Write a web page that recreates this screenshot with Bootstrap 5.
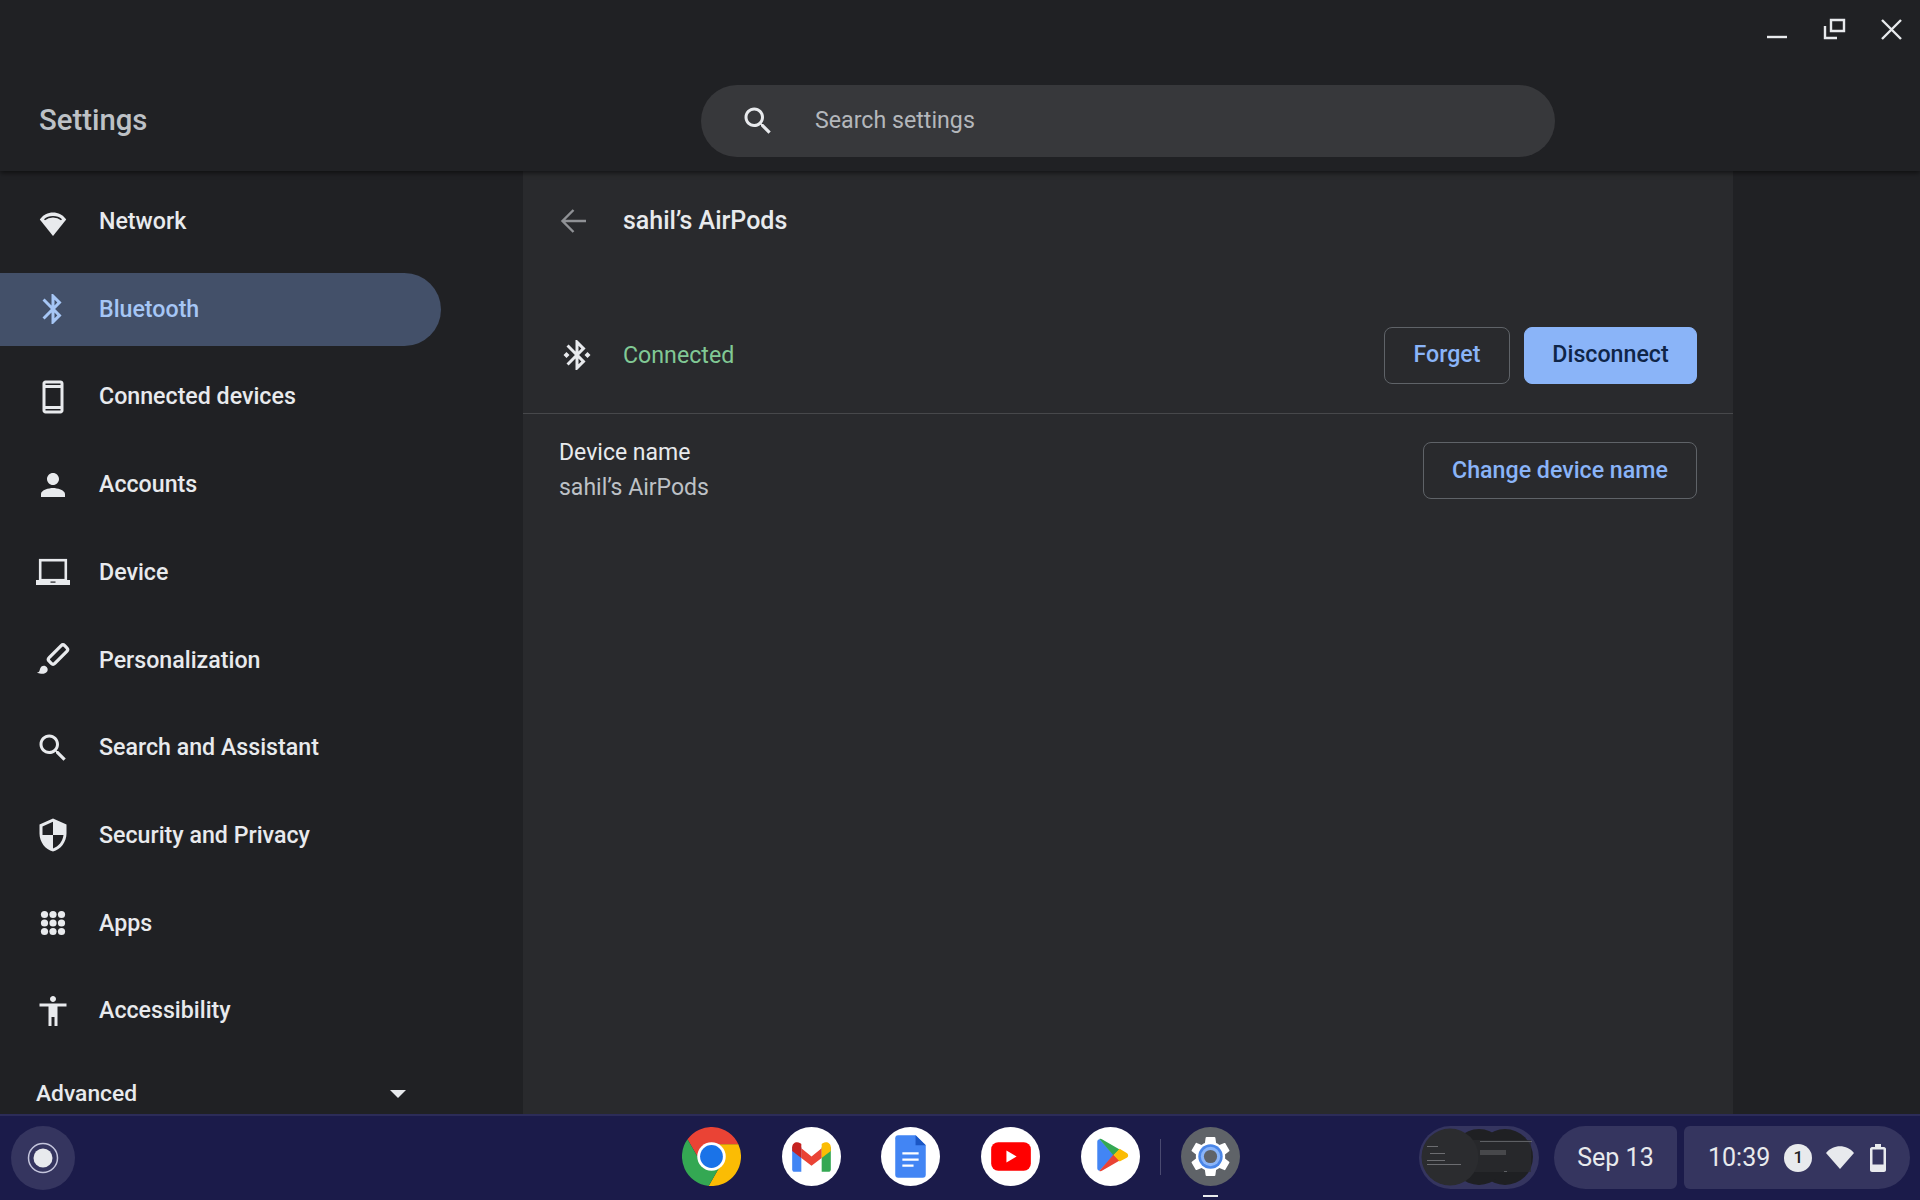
<!DOCTYPE html>
<html lang="en">
<head>
    <meta charset="UTF-8">
    <meta name="viewport" content="width=device-width, initial-scale=1.0">
    <title>Settings</title>
    <link href="https://cdn.jsdelivr.net/npm/bootstrap@5.3.3/dist/css/bootstrap.min.css" rel="stylesheet">
    <style>
        body{
            margin: 0;
            height: 1200px;
            overflow: hidden;
            background: #202124;
            font-family: Roboto, "Liberation Sans", sans-serif;
            color: #e8eaed;
        }
        .app-top{height: 171px; background: #202124; box-shadow: 0 2px 5px rgba(0,0,0,.55); z-index: 2;}
        .app-title{width: 701px; padding: 0 0 0 39px; font-size: 29.3px; font-weight: 500; color: #bdc1c6; margin-top: 102px; line-height: 36px;}
        .search-box{width: 854px; height: 72px; margin-top: 85px; border-radius: 36px; background: #37383b; padding-left: 39px;}
        .search-box span{margin-left: 39px; font-size: 23.2px; color: #b4b7bb; padding-bottom: 1px;}
        .win-btns{flex: 1; padding: 16px 16px 0 0; gap: 31px;}
        .app-body{height: 943px; overflow: hidden;}
        .side-nav{width: 523px; flex: none; padding-top: 14.5px; gap: 14.7px;}
        .side-item{width: 441px; height: 73px; padding: 0 0 1px 35px; gap: 28px; border-radius: 0 37px 37px 0; color: #e8eaed; font-size: 23.2px; font-weight: 500;}
        .side-item:hover{color: #e8eaed;}
        .side-item.on{background: #435069; color: #a6c6f5;}
        .side-item.on:hover{color: #a6c6f5;}
        .adv-row{width: 406px; padding-left: 36px; height: 28px; margin-top: 32px; font-size: 22.8px; font-weight: 500; line-height: 28px;}
        .adv-caret{width: 0; height: 0; border: 8px solid transparent; border-top: 8px solid #e8eaed; border-bottom: 0;}
        .panel{width: 1210px; flex: none; background: #292a2d;}
        .panel-head{height: 99px; padding-left: 33px;}
        .panel-head h1{margin: 0 0 0 31px; font-size: 25px; font-weight: 500; color: #e8eaed; line-height: 30px;}
        .conn-row{height: 144px; padding: 27px 36px 0 36px; border-bottom: 1px solid #47484b;}
        .conn-text{margin-left: 28px; color: #81c995; font-size: 23.2px;}
        .dev-row{padding: 21px 36px 0 36px;}
        .dev-name{font-size: 23px; line-height: 35px; color: #e8eaed;}
        .dev-name div + div{color: #bdc1c6;}
        .btn-cros{height: 57px; font-family: Roboto, sans-serif; font-size: 23.2px; font-weight: 500; border-radius: 8px; border: 1px solid #5f6368; color: #8ab4f8; background: transparent; padding: 0; line-height: 1;}
        .btn-cros:hover{color: #8ab4f8; border-color: #5f6368;}
        .btn-cros.fill{background: #8ab4f8; border-color: #8ab4f8; color: #0f2548; width: 173px; margin-left: 14px;}
        .btn-cros.fill:hover{background: #8ab4f8; color: #0f2548;}
        .btn-rename{width: 274px; margin-top: 7px;}
        .shelf{height: 86px; background: #1b1b4a; border-top: 2px solid #2c2c58; position: relative; z-index: 3;}
        .launcher-btn{position: absolute; left: 11px; top: 10px;}
        .dock{position: absolute; left: 682px; top: 11px; gap: 40.66px;}
        .dock-sep{width: 1px; height: 36px; background: #4a4a70; margin: 0 -20.5px; align-self: center;}
        .dock-mark{position: absolute; left: 521px; top: 68px; width: 15px; height: 2px; background: #e8eaed;}
        .tray{position: absolute; right: 10px; top: 10px; gap: 7px;}
        .tray-pill{height: 63px; background: #35355f; color: #e8eaed; font-size: 25px;}
        .date-pill{width: 123px; border-radius: 32px 6px 6px 32px; margin-left: 8px;}
        .clock-pill{width: 226px; border-radius: 6px 32px 32px 6px; padding-left: 24px;}
        .note-dot{width: 28px; height: 28px; border-radius: 50%; background: #e8eaed; color: #202124; font-size: 17px; font-weight: 500; margin-left: 14px; margin-right: 14px;}
    </style>
</head>
<body>
    <!-- title bar -->
    <header class="app-top d-flex position-relative">
        <div class="app-title">Settings</div>
        <div class="search-box d-flex align-items-center">
            <svg width="36" height="36" viewBox="0 0 24 24" fill="#e8eaed"><path d="M15.5 14h-.79l-.28-.27C15.41 12.59 16 11.11 16 9.5 16 5.91 13.09 3 9.5 3S3 5.91 3 9.5 5.91 16 9.5 16c1.61 0 3.09-.59 4.23-1.57l.27.28v.79l5 4.99L20.49 19l-4.99-5zm-6 0C7.01 14 5 11.99 5 9.5S7.01 5 9.5 5 14 7.01 14 9.5 11.99 14 9.5 14z"/></svg>
            <span>Search settings</span>
        </div>
        <div class="win-btns d-flex justify-content-end align-items-start">
            <svg width="26" height="26" viewBox="0 0 26 26" fill="none" stroke="#e8eaed" stroke-width="2.4"><path d="M3 21h20"/></svg>
            <svg width="26" height="26" viewBox="0 0 26 26" fill="none" stroke="#e8eaed" stroke-width="2.4"><path d="M10 4h13v11H10z"/><path d="M4 10v12h12"/></svg>
            <svg width="26" height="26" viewBox="0 0 26 26" fill="none" stroke="#e8eaed" stroke-width="2.4"><path d="M4 4l19 19M23 4L4 23"/></svg>
        </div>
    </header>

    <div class="app-body d-flex">
        <!-- left menu -->
        <div class="d-flex flex-column">
            <nav class="nav flex-column flex-nowrap side-nav">
                <a class="nav-link side-item d-flex align-items-center" href="#">
                    <svg width="36" height="36" viewBox="0 0 36 36" fill="#e8eaed"><path d="M18 32L4.8 15.6C11 6 25 6 31.2 15.6z"/><path d="M9.5 15.8C14 11.8 22 11.8 26.5 15.8" fill="none" stroke="#202124" stroke-width="1.5"/></svg>
                    Network
                </a>
                <a class="nav-link side-item on d-flex align-items-center" href="#">
                    <svg width="36" height="36" viewBox="0 0 24 24" fill="#a6c6f5"><path d="M17.71 7.71L12 2h-1v7.59L6.41 5 5 6.41 10.59 12 5 17.59 6.41 19 11 14.41V22h1l5.71-5.71-4.3-4.29 4.3-4.29zM13 5.83l1.88 1.88L13 9.59V5.83zm1.88 10.46L13 18.17v-3.76l1.88 1.88z"/></svg>
                    Bluetooth
                </a>
                <a class="nav-link side-item d-flex align-items-center" href="#">
                    <svg width="36" height="36" viewBox="0 0 24 24" fill="#e8eaed"><path d="M17 1.01L7 1c-1.1 0-2 .9-2 2v18c0 1.1.9 2 2 2h10c1.1 0 2-.9 2-2V3c0-1.1-.9-1.99-2-1.99zM17 21H7v-1h10v1zm0-3H7V6h10v12zm0-14H7V3h10v1z"/></svg>
                    Connected devices
                </a>
                <a class="nav-link side-item d-flex align-items-center" href="#">
                    <svg width="36" height="36" viewBox="0 0 24 24" fill="#e8eaed"><path d="M12 12c2.21 0 4-1.79 4-4s-1.79-4-4-4-4 1.79-4 4 1.79 4 4 4zm0 2c-2.67 0-8 1.34-8 4v2h16v-2c0-2.66-5.33-4-8-4z"/></svg>
                    Accounts
                </a>
                <a class="nav-link side-item d-flex align-items-center" href="#">
                    <svg width="36" height="36" viewBox="0 0 36 36" fill="#e8eaed"><rect x="5.2" y="6.2" width="25.6" height="20" fill="none" stroke="#e8eaed" stroke-width="2.6"/><path d="M1 26h34v5H1z"/><rect x="15.5" y="27.5" width="5" height="1.2" fill="#202124"/></svg>
                    Device
                </a>
                <a class="nav-link side-item d-flex align-items-center" href="#">
                    <svg width="36" height="36" viewBox="0 0 36 36" fill="#e8eaed"><rect x="12" y="8.500" width="22" height="8" rx="2.500" transform="rotate(-45 23 12.500)" fill="none" stroke="#e8eaed" stroke-width="3.200"/><path d="M2 30.500c2 0 2.500-1 3-3.500.6-2.500 3-3.800 5.200-3 2.400.9 3.200 3.700 2 5.500-1.300 2-3.900 2.400-6.200 2.200-1.600-.1-3-.4-4-1.200z"/></svg>
                    Personalization
                </a>
                <a class="nav-link side-item d-flex align-items-center" href="#">
                    <svg width="36" height="36" viewBox="0 0 24 24" fill="#e8eaed"><path d="M15.5 14h-.79l-.28-.27C15.41 12.59 16 11.11 16 9.5 16 5.91 13.09 3 9.5 3S3 5.91 3 9.5 5.91 16 9.500 16c1.610 0 3.090-.59 4.230-1.570l.27.28v.79l5 4.990L20.490 19l-4.990-5zm-6 0C7.010 14 5 11.990 5 9.500S7.010 5 9.500 5 14 7.010 14 9.500 11.990 14 9.500 14z"/></svg>
                    Search and Assistant
                </a>
                <a class="nav-link side-item d-flex align-items-center" href="#">
                    <svg width="36" height="36" viewBox="0 0 24 24" fill="#e8eaed"><path d="M12 1L3 5v6c0 5.550 3.840 10.740 9 12 5.160-1.260 9-6.450 9-12V5l-9-4zm0 10.990h7c-.53 4.120-3.280 7.790-7 8.940V12H5V6.300l7-3.110v8.800z"/></svg>
                    Security and Privacy
                </a>
                <a class="nav-link side-item d-flex align-items-center" href="#">
                    <svg width="36" height="36" viewBox="0 0 36 36" fill="#e8eaed"><circle cx="9.500" cy="9.500" r="3.600"/><circle cx="18" cy="9.500" r="3.600"/><circle cx="26.500" cy="9.500" r="3.600"/><circle cx="9.500" cy="18" r="3.600"/><circle cx="18" cy="18" r="3.600"/><circle cx="26.500" cy="18" r="3.600"/><circle cx="9.500" cy="26.500" r="3.600"/><circle cx="18" cy="26.500" r="3.600"/><circle cx="26.500" cy="26.500" r="3.600"/></svg>
                    Apps
                </a>
                <a class="nav-link side-item d-flex align-items-center" href="#">
                    <svg width="36" height="36" viewBox="0 0 24 24" fill="#e8eaed"><path d="M12 2c1.100 0 2 .9 2 2s-.9 2-2 2-2-.9-2-2 .9-2 2-2zm9 7h-6v13h-2v-6h-2v6H9V9H3V7h18v2z"/></svg>
                    Accessibility
                </a>
            </nav>
            <div class="adv-row d-flex align-items-center justify-content-between">
                <span>Advanced</span>
                <span class="adv-caret"></span>
            </div>
        </div>

        <!-- device page -->
        <main class="panel">
            <div class="panel-head d-flex align-items-center">
                <svg width="36" height="36" viewBox="0 0 36 36" fill="none" stroke="#8f9195" stroke-width="2.400"><path d="M30 18H7M17.500 7L6.500 18l11 11"/></svg>
                <h1>sahil’s AirPods</h1>
            </div>
            <div class="conn-row d-flex align-items-center">
                <svg width="36" height="36" viewBox="0 0 24 24" fill="#e8eaed"><path d="M7 12l-2-2-2 2 2 2 2-2zm10.710-4.290L12 2h-1v7.590L6.410 5 5 6.410 10.590 12 5 17.590 6.410 19 11 14.410V22h1l5.710-5.710-4.300-4.290 4.300-4.290zM13 5.830l1.880 1.880L13 9.590V5.830zm1.880 10.460L13 18.170v-3.760l1.880 1.880zM19 10l-2 2 2 2 2-2-2-2z"/></svg>
                <span class="conn-text me-auto">Connected</span>
                <button class="btn btn-cros" style="width: 126px">Forget</button>
                <button class="btn btn-cros fill">Disconnect</button>
            </div>
            <div class="dev-row d-flex justify-content-between align-items-start">
                <div class="dev-name">
                    <div>Device name</div>
                    <div>sahil’s AirPods</div>
                </div>
                <button class="btn btn-cros btn-rename">Change device name</button>
            </div>
        </main>
    </div>

    <!-- shelf -->
    <footer class="shelf">
        <div class="launcher-btn">
            <svg width="64" height="64" viewBox="0 0 64 64"><circle cx="32" cy="32" r="32" fill="#35355f"/><circle cx="32" cy="32" r="14.500" fill="none" stroke="#c4c5dc" stroke-width="1.500"/><circle cx="32" cy="32" r="9.500" fill="#e8eaed"/></svg>
        </div>
        <div class="dock d-flex position-absolute">
            <svg width="59" height="59" viewBox="0 0 58 58"><path d="M5.400 12.140A29 29 0 0 1 55.400 17L29 17 18.600 35z" fill="#ea4335"/><path d="M55.400 17A29 29 0 0 1 26.200 57.900L39.400 35 29 17z" fill="#fbbc04"/><path d="M26.200 57.900A29 29 0 0 1 5.400 12.140L18.600 35 39.400 35z" fill="#34a853"/><circle cx="29" cy="29" r="14" fill="#fff"/><circle cx="29" cy="29" r="11.200" fill="#1a73e8"/></svg>
            <svg width="59" height="59" viewBox="0 0 58 58"><circle cx="29" cy="29" r="29" fill="#fff"/><path d="M10 20h9v24h-6.500a2.500 2.500 0 0 1-2.500-2.500z" fill="#4285f4"/><path d="M39 20h9v21.500a2.500 2.500 0 0 1-2.500 2.500H39z" fill="#34a853"/><path d="M19 21l10 8 10-8v9.500L29 38l-10-7.500z" fill="#ea4335"/><path d="M10 20c0-4.500 4.500-6.500 8-4l1 .8V30.500L10 23.500z" fill="#c5221f"/><path d="M48 20c0-4.500-4.500-6.500-8-4l-1 .8V30.500l9-7z" fill="#fbbc04"/></svg>
            <svg width="59" height="59" viewBox="0 0 58 58"><circle cx="29" cy="29" r="29" fill="#fff"/><path d="M17 8h17l10 10v29a3 3 0 0 1-3 3H17a3 3 0 0 1-3-3V11a3 3 0 0 1 3-3z" fill="#4285f4"/><path d="M34 8l10 10H34z" fill="#1a56c4"/><path d="M21 26h16M21 32h16M21 38h11" stroke="#fff" stroke-width="2.200"/></svg>
            <svg width="59" height="59" viewBox="0 0 58 58"><circle cx="29" cy="29" r="29" fill="#fff"/><rect x="10" y="15" width="39" height="28" rx="7" fill="#f00"/><path d="M25 23l10 6-10 6z" fill="#fff"/></svg>
            <svg width="59" height="59" viewBox="0 0 58 58"><circle cx="29" cy="29" r="29" fill="#fff"/><path d="M16 14.500c0-1.500 1-2.500 2.400-2.500l14 15.500-14 15.500c-1.400 0-2.400-1-2.400-2.500z" fill="#4285f4"/><path d="M18 11.800c1-.4 2-.2 3 .4l17 9.800-6 6z" fill="#34a853"/><path d="M18 43.200c1 .4 2 .2 3-.4l17-9.800-6-6z" fill="#ea4335"/><path d="M38 21.500l6.500 3.700c2.500 1.400 2.500 3.900 0 5.300L38 34l-6-6.500z" fill="#fbbc04"/></svg>
            <span class="dock-sep"></span>
            <svg width="59" height="59" viewBox="0 0 58 58"><circle cx="29" cy="29" r="29" fill="#5f6368"/><g transform="translate(5 5) scale(2)" fill="#fff"><path d="M19.140 12.940c.04-.3.06-.61.06-.94 0-.32-.02-.64-.07-.94l2.030-1.580c.18-.14.23-.41.12-.61l-1.920-3.320c-.12-.22-.37-.29-.59-.22l-2.390.96c-.5-.38-1.030-.7-1.620-.94l-.36-2.540c-.04-.24-.24-.41-.48-.41h-3.840c-.24 0-.43.17-.47.41l-.36 2.540c-.59.24-1.130.57-1.620.94l-2.390-.96c-.22-.08-.47 0-.59.22L2.740 8.870c-.12.21-.08.47.12.61l2.030 1.580c-.05.3-.09.63-.09.94s.02.64.07.94l-2.030 1.580c-.18.14-.23.41-.12.61l1.920 3.320c.12.22.37.29.59.22l2.390-.96c.5.38 1.030.7 1.620.94l.36 2.540c.05.24.24.41.48.41h3.840c.24 0 .44-.17.47-.41l.36-2.540c.59-.24 1.130-.56 1.620-.94l2.390.96c.22.08.47 0 .59-.22l1.920-3.320c.12-.22.07-.47-.12-.61l-2.010-1.580z"/></g><circle cx="29" cy="29" r="12" fill="#4a86e8"/><circle cx="29" cy="29" r="9.500" fill="#8ab4f8"/><circle cx="29" cy="29" r="6.500" fill="#5f6368"/></svg>
            <span class="dock-mark"></span>
        </div>
        <div class="tray d-flex">
            <svg width="120" height="63" viewBox="0 0 120 63"><rect width="120" height="63" rx="31.500" fill="#35355f"/><circle cx="86" cy="31" r="28" fill="#1f2023"/><circle cx="60" cy="31" r="28" fill="#1f2023"/><path d="M46 14h66v32H46z" fill="#2b2c2f" opacity=".7"/><rect x="61" y="24" width="26" height="5" fill="#47484b"/><rect x="61" y="15" width="52" height=".8" fill="#6d6f73"/><rect x="85" y="45" width="3" height=".8" fill="#6d6f73"/><circle cx="31" cy="31" r="28.500" fill="#2b2c2f"/><rect x="8" y="20" width="11" height=".8" fill="#7d7f83"/><rect x="11" y="27" width="15" height=".8" fill="#7d7f83"/><rect x="8" y="34" width="18" height=".8" fill="#7d7f83"/><rect x="8" y="38" width="34" height=".8" fill="#7d7f83"/></svg>
            <div class="tray-pill date-pill d-flex align-items-center justify-content-center">Sep 13</div>
            <div class="tray-pill clock-pill d-flex align-items-center">
                <span>10:39</span>
                <span class="note-dot d-flex align-items-center justify-content-center">1</span>
                <svg width="28" height="26" viewBox="0 0 28 26" fill="#e8eaed"><path d="M14 24L0 8C7-1 21-1 28 8z"/></svg>
                <svg class="ms-3" width="16" height="28" viewBox="0 0 16 28"><path d="M5 0h6v3h3c1 0 2 1 2 2v21c0 1-1 2-2 2H2c-1 0-2-1-2-2V5c0-1 1-2 2-2h3z" fill="#e8eaed"/><rect x="2.500" y="5.500" width="11" height="15" fill="#35355f"/></svg>
            </div>
        </div>
    </footer>
</body>
</html>
